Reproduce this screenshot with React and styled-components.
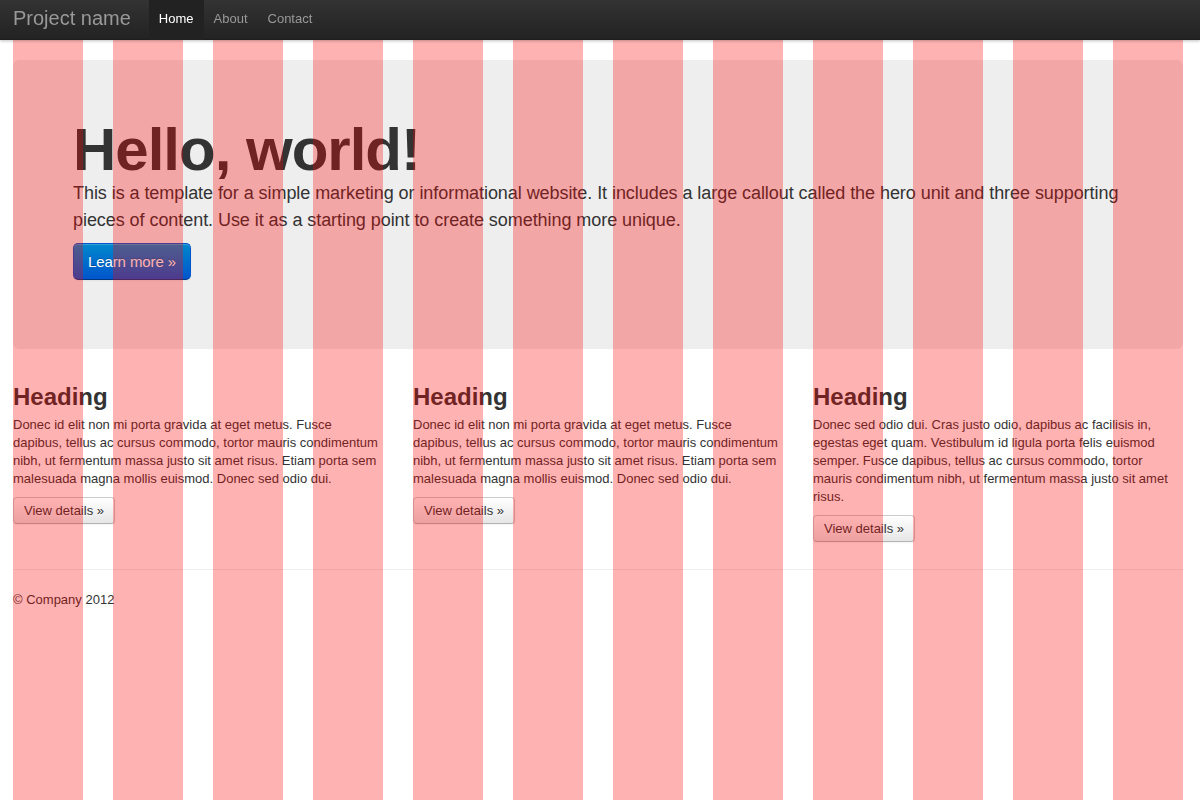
import styled, {createGlobalStyle} from 'styled-components';

const GlobalStyle = createGlobalStyle`
  html, body {
    margin : 0;
    padding : 0;
  }
  body {
    padding-top : 60px;
    font-family : "Liberation Sans", Arial, Helvetica, sans-serif;
    font-size : 13px;
    line-height : 18px;
    color : #333;
    background : #fff;
  }
`;

// Top bar
const Navbar = styled.div`
  position : fixed;
  top : 0;
  left : 0;
  right : 0;
  z-index : 1030;
  height : 40px;
  background : linear-gradient(to bottom, #333333, #222222);
  box-shadow : 0 1px 3px rgba(0,0,0,.25), inset 0 -1px 0 rgba(0,0,0,.1);
`;

const NavContainer = styled.div`
  width : 1170px;
  margin-left : 13px;
  display : flex;
  align-items : stretch;
  height : 40px;
`;

const Brand = styled.a`
  display : block;
  padding : 8px 20px 12px;
  margin-left : -20px;
  font-size : 20px;
  line-height : 20px;
  font-weight : 200;
  color : #999;
  text-decoration : none;
`;

const NavList = styled.ul`
  display : flex;
  list-style : none;
  margin : 0 0 0 -2px;
  padding : 0;
`;

const NavLink = styled.a`
  display : block;
  padding : 9px 10px 12px;
  line-height : 19px;
  font-size : 13px;
  text-decoration : none;
  color : ${props => props.active ? '#fff' : '#999'};
  background : ${props => props.active ? '#222' : 'transparent'};
`;

// Page body
const Container = styled.div`
  width : 1170px;
  margin-left : 13px;
`;

const HeroUnit = styled.div`
  padding : 60px;
  margin-bottom : 30px;
  background : #eeeeee;
  border-radius : 6px;
`;

const HeroTitle = styled.h1`
  margin : 0;
  font-size : 60px;
  line-height : 60px;
  letter-spacing : -1px;
  font-weight : bold;
  color : #333;
`;

const HeroText = styled.p`
  margin : 0 0 9px;
  font-size : 18px;
  line-height : 27px;
  font-weight : 200;
  letter-spacing : -0.06px;
`;

const Button = styled.a`
  display : inline-block;
  box-sizing : border-box;
  padding : ${props => props.large ? '9px 14px' : '4px 10px'};
  font-size : ${props => props.large ? '15px' : '13px'};
  line-height : 17px;
  letter-spacing : ${props => props.large ? '-0.1px' : '0'};
  border-radius : ${props => props.large ? '5px' : '4px'};
  text-decoration : none;
  cursor : pointer;
  color : ${props => props.primary ? '#fff' : '#333'};
  text-shadow : ${props => props.primary ? '0 -1px 0 rgba(0,0,0,.25)' : '0 1px 1px rgba(255,255,255,.75)'};
  background : ${props => props.primary
    ? 'linear-gradient(to bottom, #0088cc, #0055cc)'
    : 'linear-gradient(to bottom, #ffffff, #e6e6e6)'};
  border : 1px solid ${props => props.primary ? '#0055cc' : '#cccccc'};
  border-bottom-color : ${props => props.primary ? '#003580' : '#b3b3b3'};
  box-shadow : inset 0 1px 0 rgba(255,255,255,.2), 0 1px 2px rgba(0,0,0,.05);
`;

const Row = styled.div`
  display : grid;
  grid-template-columns : repeat(3, 370px);
  column-gap : 30px;
`;

const Heading = styled.h2`
  margin : 0;
  font-size : 24px;
  line-height : 36px;
  font-weight : bold;
`;

const Para = styled.p`
  margin : 0 0 9px;
  padding-top : ${props => props.first ? '1px' : '0'};
`;

const Rule = styled.hr`
  margin : 18px 0;
  border : 0;
  border-top : 1px solid #eeeeee;
  border-bottom : 1px solid #ffffff;
`;

const Footer = styled.footer`
  padding-top : 2px;
  p {
    margin : 0 0 9px;
  }
`;

// grid overlay - sits above content but under the navbar
const GridOverlay = styled.div`
  position : fixed;
  top : 0;
  bottom : 0;
  left : 13px;
  width : 1170px;
  z-index : 1000;
  display : grid;
  grid-template-columns : repeat(12, 70px);
  column-gap : 30px;
  pointer-events : none;
`;

const GridColumn = styled.div`
  background : rgba(255, 0, 0, 0.3);
`;

const features = [
  "Donec id elit non mi porta gravida at eget metus. Fusce dapibus, tellus ac cursus commodo, tortor mauris condimentum nibh, ut fermentum massa justo sit amet risus. Etiam porta sem malesuada magna mollis euismod. Donec sed odio dui.",
  "Donec id elit non mi porta gravida at eget metus. Fusce dapibus, tellus ac cursus commodo, tortor mauris condimentum nibh, ut fermentum massa justo sit amet risus. Etiam porta sem malesuada magna mollis euismod. Donec sed odio dui.",
  "Donec sed odio dui. Cras justo odio, dapibus ac facilisis in, egestas eget quam. Vestibulum id ligula porta felis euismod semper. Fusce dapibus, tellus ac cursus commodo, tortor mauris condimentum nibh, ut fermentum massa justo sit amet risus.",
];

const App = () => {
  return <>
    <GlobalStyle/>
    <Navbar>
      <NavContainer>
        <Brand href="#">Project name</Brand>
        <NavList>
          <li><NavLink href="#" active>Home</NavLink></li>
          <li><NavLink href="#about">About</NavLink></li>
          <li><NavLink href="#contact">Contact</NavLink></li>
        </NavList>
      </NavContainer>
    </Navbar>

    <Container>
      <HeroUnit>
        <HeroTitle>Hello, world!</HeroTitle>
        <HeroText>This is a template for a simple marketing or informational website. It includes a large callout called the hero unit and three supporting pieces of content. Use it as a starting point to create something more unique.</HeroText>
        <HeroText><Button primary large>Learn more &raquo;</Button></HeroText>
      </HeroUnit>

      <Row>
        {features.map((text, i) => (
          <div key={i}>
            <Heading>Heading</Heading>
            <Para first>{text}</Para>
            <Para><Button>View details &raquo;</Button></Para>
          </div>
        ))}
      </Row>

      <Rule/>

      <Footer>
        <p>&copy; Company 2012</p>
      </Footer>
    </Container>

    <GridOverlay>
      {Array.from({length : 12}).map((_, i) => <GridColumn key={i}/>)}
    </GridOverlay>
  </>
};

export default App;
